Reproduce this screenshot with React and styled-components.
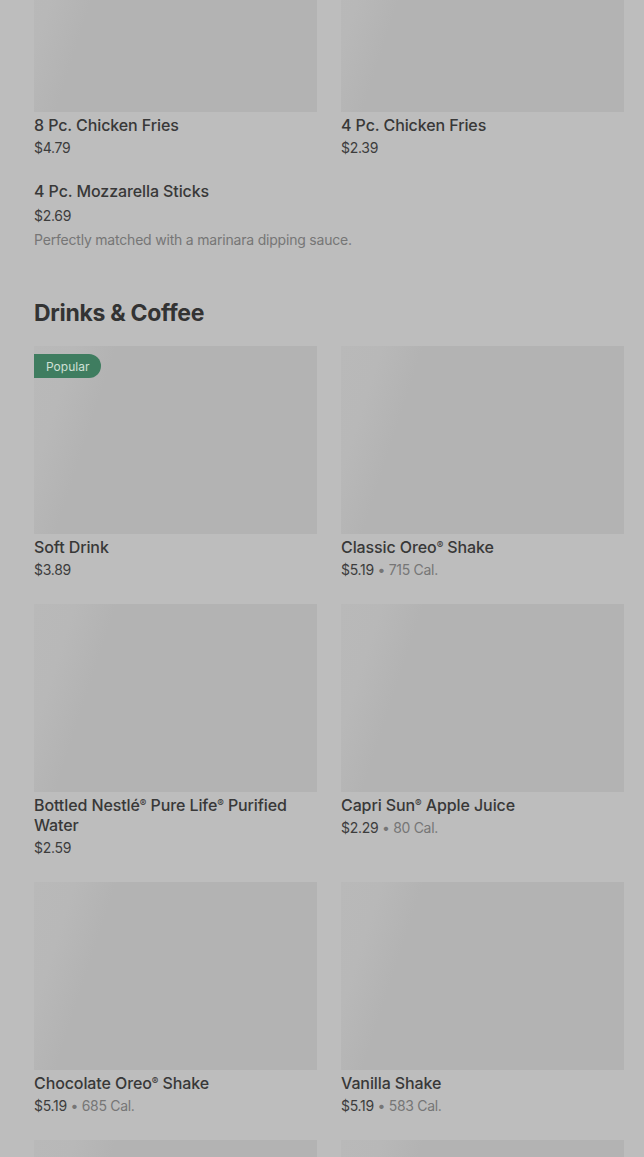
import React from 'react'
import styled, { createGlobalStyle } from 'styled-components'

const GlobalStyle = createGlobalStyle`
    * { box-sizing: border-box; }
    body {
        margin: 0;
        background: #bdbdbd;
        font-family: Inter, Roboto, "Liberation Sans", Arial, sans-serif;
        overflow: hidden;
    }
`

// splits "®" out so it can be drawn small and raised like the reference
const withReg = (text) =>
    text.split('®').flatMap((part, i, arr) =>
        i < arr.length - 1 ? [part, <StReg key={i}>®</StReg>] : [part]
    )

const topItems = [
    { name: '8 Pc. Chicken Fries', price: '$4.79' },
    { name: '4 Pc. Chicken Fries', price: '$2.39' },
]

const drinks = [
    { name: 'Soft Drink', price: '$3.89', popular: true },
    { name: 'Classic Oreo® Shake', price: '$5.19', cal: '715 Cal.' },
    { name: 'Bottled Nestlé® Pure Life® Purified Water', price: '$2.59' },
    { name: 'Capri Sun® Apple Juice', price: '$2.29', cal: '80 Cal.' },
    { name: 'Chocolate Oreo® Shake', price: '$5.19', cal: '685 Cal.' },
    { name: 'Vanilla Shake', price: '$5.19', cal: '583 Cal.' },
    { name: 'Medium Coffee', price: '$1.99' },
    { name: 'Iced Coffee', price: '$2.49' },
]

const Card = ({ item }) => (
    <StCard>
        <StImage>
            {item.popular && <StBadge>Popular</StBadge>}
        </StImage>
        <StName>{withReg(item.name)}</StName>
        <StPrice>
            {item.price}
            {item.cal && <StCal> • {item.cal}</StCal>}
        </StPrice>
    </StCard>
)

const App = () => {
    return (
        <>
            <GlobalStyle />
            <StPage>
                <StGrid>
                    {topItems.map((it) => <Card key={it.name} item={it} />)}
                </StGrid>
                <StWideItem>
                    <StName>4 Pc. Mozzarella Sticks</StName>
                    <StWidePrice>$2.69</StWidePrice>
                    <StDesc>Perfectly matched with a marinara dipping sauce.</StDesc>
                </StWideItem>

                <StSection>
                    <StHeading>Drinks &amp; Coffee</StHeading>
                    <StGrid>
                        {drinks.map((it) => <Card key={it.name} item={it} />)}
                    </StGrid>
                </StSection>
            </StPage>
        </>
    )
}

export default App

const StPage = styled.div`
    margin-top: -76px;
    padding: 0 20px 0 34px;
`
const StGrid = styled.div`
    display: grid;
    grid-template-columns: 1fr 1fr;
    column-gap: 24px;
    row-gap: 24px;
`
const StCard = styled.div`
    display: flex;
    flex-direction: column;
`
const StImage = styled.div`
    position: relative;
    height: 188px;
    margin-bottom: 3px;
    background: linear-gradient(108deg, #b9b9b9 0%, #b8b8b8 12%, #b3b3b3 24%, #b3b3b3 100%);
`
const StBadge = styled.span`
    position: absolute;
    top: 8px;
    left: 0;
    height: 24px;
    padding: 0 12px;
    display: flex;
    align-items: center;
    background: #3f7d60;
    color: #cfe0d6;
    font-size: 12px;
    border-radius: 0 12px 12px 0;
`
const StName = styled.div`
    font-size: 16px;
    line-height: 20px;
    font-weight: 500;
    letter-spacing: -0.1px;
    color: #383838;
`
const StReg = styled.sup`
    font-size: 0.62em;
    vertical-align: 0.45em;
    line-height: 1;
`
const StPrice = styled.div`
    margin-top: 3px;
    font-size: 14px;
    line-height: 20px;
    letter-spacing: -0.3px;
    color: #3c3c3c;
`
const StCal = styled.span`
    color: #767676;
`
const StWideItem = styled.div`
    margin-top: 23px;
    display: flex;
    flex-direction: column;
`
const StWidePrice = styled.div`
    margin-top: 5px;
    font-size: 14px;
    line-height: 20px;
    letter-spacing: -0.3px;
    color: #3c3c3c;
`
const StDesc = styled.div`
    margin-top: 4px;
    font-size: 14px;
    line-height: 20px;
    letter-spacing: -0.2px;
    color: #767676;
`
const StSection = styled.div`
    margin-top: 49px;
`
const StHeading = styled.h2`
    margin: 0 0 19px 0;
    font-size: 23px;
    line-height: 28px;
    font-weight: 700;
    letter-spacing: -0.3px;
    color: #333;
`
